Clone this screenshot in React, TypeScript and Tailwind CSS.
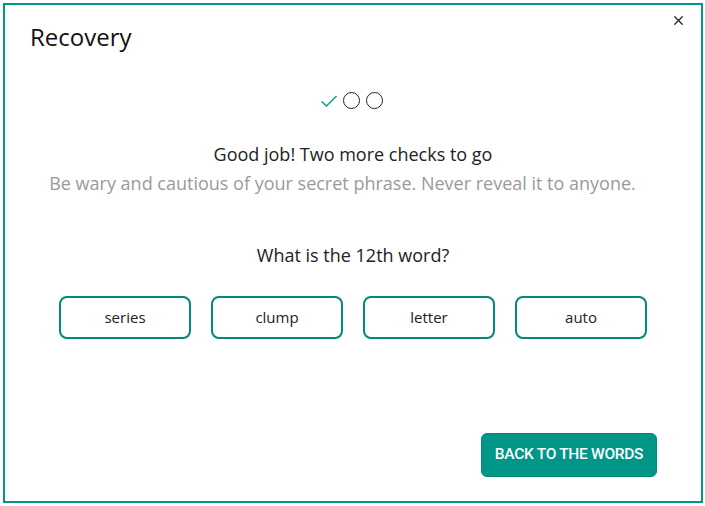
import { X } from "lucide-react";

const words = ["series", "clump", "letter", "auto"];

const Progress = () => {
  return (
    <div className="flex items-center justify-center gap-[6px] pr-[3px]">
      <svg width="18" height="14" viewBox="0 0 18 14" className="mr-[-1px]">
        <path d="M1.5 7.5 L6.5 12 L16.5 2" fill="none" stroke="#14a08f" strokeWidth="1.6" />
      </svg>
      <span className="w-[17px] h-[17px] rounded-full border-[1.5px] border-[#222]" />
      <span className="w-[17px] h-[17px] rounded-full border-[1.5px] border-[#222]" />
    </div>
  );
};

export default function App() {
  return (
    <div className="w-[705px] h-[506px] bg-white p-[3px] font-['Open_Sans',sans-serif]">
      <div className="relative w-[700px] h-[500px] border-2 border-[#009688] bg-white flex flex-col">
        <h1 className="pl-[25px] pt-[16px] text-[24px] leading-[32px] text-[#111]">Recovery</h1>
        <button className="absolute top-[8px] right-[15px] text-[#222]">
          <X size={15} strokeWidth={2} />
        </button>

        <div className="mt-[39px]">
          <Progress />
        </div>

        <div className="mt-[31px] text-center text-[18px] leading-[29px]">
          <p className="text-[#222]">Good job! Two more checks to go</p>
          <p className="pr-[21px] text-[#9a9a9a]">Be wary and cautious of your secret phrase. Never reveal it to anyone.</p>
        </div>

        <p className="mt-[45px] text-center text-[18px] leading-[24px] text-[#222]">What is the 12th word?</p>

        <div className="mt-[29px] flex justify-center gap-[20px]">
          {words.map((w) => (
            <button
              key={w}
              className="w-[132px] h-[43px] rounded-[8px] border-2 border-[#00897b] text-[15px] text-[#222]"
            >
              {w}
            </button>
          ))}
        </div>

        <div className="mt-auto mb-[24px] flex justify-end pr-[44px]">
          <button className="w-[176px] h-[44px] rounded-[6px] bg-[#009688] border border-[#00897b] text-white text-[15.5px] font-medium uppercase font-['Roboto',sans-serif] tracking-[-0.3px]">
            Back to the words
          </button>
        </div>
      </div>
    </div>
  );
}
